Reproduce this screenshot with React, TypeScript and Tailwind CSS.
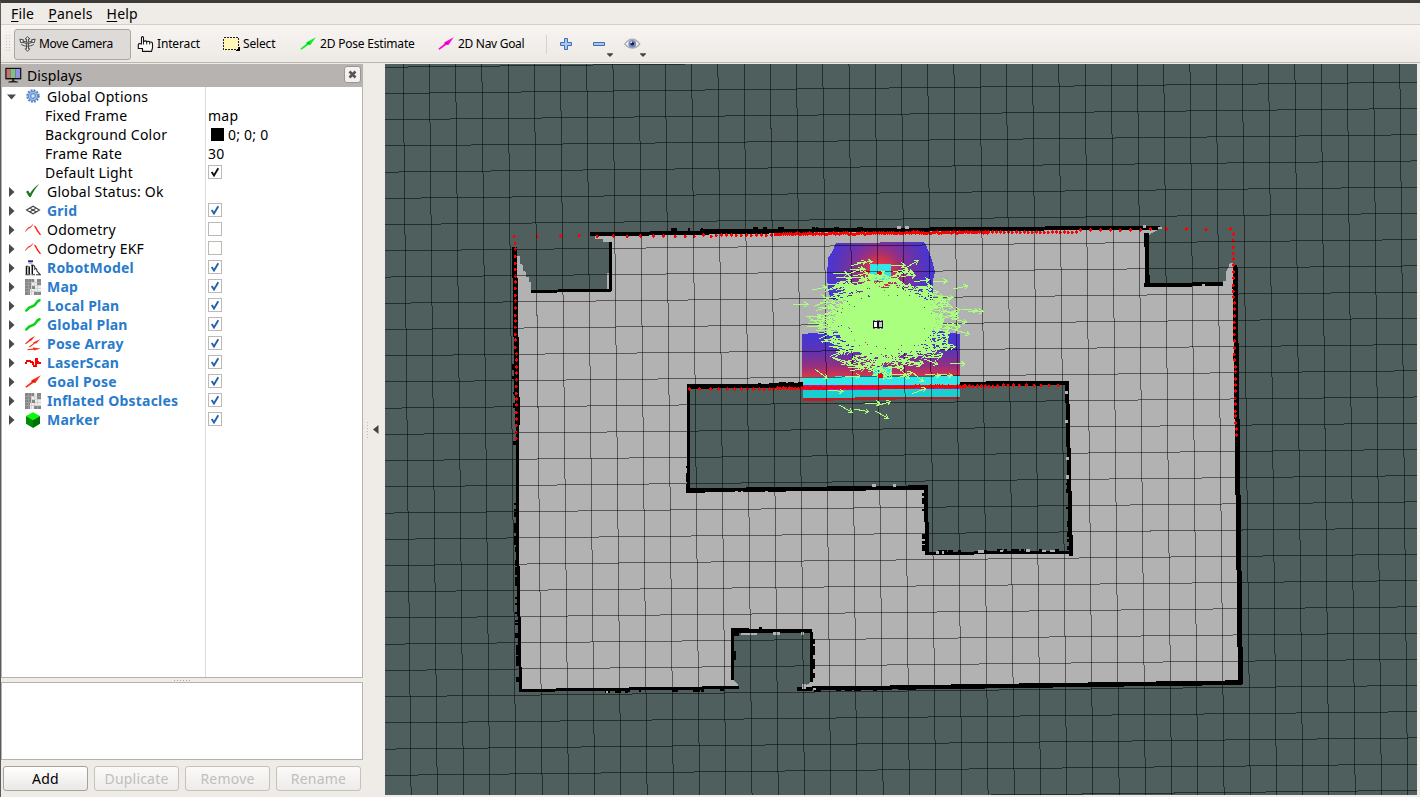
import React from 'react';

const FONT = "font-['Noto_Sans','Open_Sans',sans-serif]";

function makeRandom(seed: number) {
  let s = seed;
  return () => {
    s = (s * 1664525 + 1013904223) % 4294967296;
    return s / 4294967296;
  };
}

/* ---------- Small icons ---------- */

const GearIcon = () => (
  <svg width="16" height="16" viewBox="0 0 16 16" className="-mt-[2px]">
    <circle cx="8" cy="8" r="5.700" fill="none" stroke="#4a7cc0" strokeWidth="2" strokeDasharray="1.790 1.190" />
    <circle cx="8" cy="8" r="4.700" fill="#9dbde6" stroke="#5a8acb" strokeWidth="1" />
    <circle cx="8" cy="8" r="2.600" fill="none" stroke="#5a8acb" strokeWidth="0.800" />
    <circle cx="8" cy="8" r="1" fill="#f2f6fc" />
  </svg>
);
const OkIcon = () => (
  <svg width="16" height="16" viewBox="0 0 16 16" className="-mt-px">
    <path d="M1 8.800 3.200 7.600 5 10.400 C7.500 6.500 10.500 3 14.400 1 C10.500 5 8 9 5.800 14 L4.200 14Z" fill="#1f7a1f" />
  </svg>
);
const GridIcon = () => (
  <svg width="16" height="16" viewBox="0 0 16 16" fill="none" stroke="#444" strokeWidth="1.100" className="-mt-[2px]">
    <path d="M1.500 8 8 4.200 14.500 8 8 11.800Z M4.700 6.100 11.300 9.900 M11.300 6.100 4.700 9.900" />
  </svg>
);
const OdometryIcon = () => (
  <svg width="16" height="16" viewBox="0 0 16 16" fill="#ff2010">
    <path d="M0 9.200 3.200 5.600 5.500 4.500 8 2 7.600 3.500 5.500 5.800 3.500 6.800 .4 9.800z" />
    <path d="M8.500 3.200 11 4.500 12.800 8 16 12.400 15 13.200 12 9.500 10.400 6.500z" />
  </svg>
);
const RobotIcon = () => (
  <svg width="16" height="16" viewBox="0 0 16 16">
    <path d="M3 .3h5v1.800H3z" fill="#1c2f90" />
    <path d="M3.500 2.100h4v1.600h-4z" fill="#aaa" />
    <path d="M1.500 6v8.500M4.200 6.500v7.500M7.300 5v9" stroke="#111" strokeWidth="1.500" />
    <path d="M.5 14.800h5M6.500 14.800H10M11 14.800h5M1 6.200h2.500M6 5.200q3-.8 3.800 1.800v3M10 8q1.800 0 2 3l3 3.400" stroke="#333" strokeWidth="1.100" fill="none" />
  </svg>
);
const MapIcon = () => (
  <svg width="16" height="16" viewBox="0 0 16 16" shapeRendering="crispEdges">
    <path d="M0 0h16v16H0z" fill="#eeeeee" />
    <path d="M3.500 0v16M6.500 0v16M9.500 0v16M12.500 0v16M0 3.500h16M0 6.500h16M0 9.500h16M0 12.500h16" stroke="#d2d2d2" strokeWidth="1" />
    <path d="M0 0h9v3H6v3H6v4H5v6H0zM12 0h4v6h-4zM7 7h3v3H7zM9 13h7v3H9z" fill="#868686" />
    <path d="M3.500 0v16M6.500 0v3M0 3.500h6M0 6.500h5M0 9.500h5M0 12.500h5M12 3.500h4M12.500 13v3" stroke="#9c9c9c" strokeWidth="1" />
  </svg>
);
const PathIcon = () => (
  <svg width="16" height="16" viewBox="0 0 16 16">
    <path d="M1.300 12.500C3.500 9.500 5.500 8.700 8.200 8C11.500 7.200 10.500 3.500 14.500 2.200" stroke="#09d317" strokeWidth="2.500" fill="none" strokeLinecap="round" />
  </svg>
);
const PoseArrayIcon = () => (
  <svg width="16" height="16" viewBox="0 0 16 16" fill="#f5301c">
    <path d="M0 7.400 4.500 3.600 4 3.200 10 0 6.600 4.500 6 4.400 .8 8.200zM4 10.600 8.500 7.200 8 6.600 15.600 3 11 7.800 10.200 7.200 4.600 11.400zM2.500 13.300 8 12.500V11.600L15.800 12.400 9 14.600V13.800L2.600 14.300z" />
  </svg>
);
const LaserIcon = () => (
  <svg width="16" height="16" viewBox="0 0 16 16" shapeRendering="crispEdges" fill="#ff0000">
    <path d="M0 7h2v2H0zM1 5h5v2H1zM5 6h3v2H5zM7 7h2v3H7zM8 10h3v2H8zM10 3h2v9h-2zM11 3h2v3h-2zM12 6h2v3h-2zM13 7h3v2h-3z" />
  </svg>
);
const ArrowIcon = ({ color, dark }: { color: string; dark: string }) => (
  <svg width="16" height="16" viewBox="0 0 16 16">
    <path d="M.3 12.700 6.500 7.700 6.200 6.600 15.800 1.200 10.200 9.200 8.800 8.600 1.500 13.700z" fill={color} />
    <path d="M7 7.400 9.400 5.900 9.200 8.600" fill={dark} />
  </svg>
);
const CubeIcon = () => (
  <svg width="16" height="16" viewBox="0 0 16 16">
    <path d="M8 .2 15 4 8 8 1 4z" fill="#00ff00" />
    <path d="M1 4 8 8v8L1 11.800z" fill="#008c00" />
    <path d="M15 4 8 8v8l7-4.200z" fill="#007000" />
  </svg>
);
const MonitorIcon = () => (
  <svg width="18" height="17" viewBox="0 0 18 17">
    <path d="M.3 .8h16v11.600H.3z" fill="#111" />
    <path d="M1.500 2h4.400v9H1.500z" fill="#c07474" />
    <path d="M5.900 2h4.400v9H5.900z" fill="#7cc47c" />
    <path d="M10.300 2h4.800v9h-4.800z" fill="#9292e4" />
    <path d="M7.200 12h2v2h-2z" fill="#222" />
    <path d="M3.200 14.800q5-2.200 10 0v.8h-10z" fill="#222" />
  </svg>
);
const MoveIcon = () => (
  <svg width="17" height="16" viewBox="0 0 17 16" fill="#f6f6f6" stroke="#444" strokeWidth="1">
    <path d="M8.500 .6 10.800 3H9.400V12.800H10.800L8.500 15.400 6.200 12.800H7.600V3H6.200z" />
    <path d="M.8 3.200 4.500 3.800 3.800 5.200Q8.500 7.500 13.200 5.200L12.500 3.800 16.200 3.200 15 7 14 6.200Q8.500 9.200 3 6.200L2 7z" />
    <path d="M2.200 8.500Q8.500 12 14.800 8.500" fill="none" strokeWidth=".9" />
  </svg>
);
const HandIcon = () => (
  <svg width="17" height="16" viewBox="0 0 17 16">
    <path d="M4.500 8V1.700Q4.500 .6 5.500 .6T6.500 1.700V5.500Q9 4.200 9.700 5.700Q12 4.700 12.700 6.200Q15.500 5.500 15.500 8V12L14.500 15.400H5.500V12.500H1.300V8.500Q1.300 7.500 2.500 7.500z" fill="#fff" stroke="#111" strokeWidth="1.100" />
    <path d="M6.500 5v3.500M9.700 5.700V8.500M12.700 6.200V8.500" stroke="#111" strokeWidth=".9" fill="none" />
  </svg>
);
const SelectIcon = () => (
  <svg width="17" height="14" viewBox="0 0 17 14" shapeRendering="crispEdges">
    <path d="M.5 .5h15v12H.5z" fill="#fff6b8" stroke="#222" strokeDasharray="2 1" />
    <path d="M16.500 9.500v4h-4z" fill="#000" />
  </svg>
);
const EyeIcon = () => (
  <svg width="17" height="12" viewBox="0 0 17 12">
    <path d="M.8 6Q8.300-3.600 15.800 6Q8.300 14.200 .8 6z" fill="#f2f2f2" stroke="#a9a9a4" strokeWidth="1.200" />
    <circle cx="8.300" cy="5.800" r="3.900" fill="#7389c0" />
    <circle cx="8.300" cy="5.800" r="1.800" fill="#14183a" />
    <circle cx="7.300" cy="4.300" r=".9" fill="#eef" />
  </svg>
);
const Caret = () => (
  <svg width="6" height="4" viewBox="0 0 6 4"><path d="M0 .3h6v.8L3 4 0 1.100z" fill="#444" /></svg>
);

/* ---------- Displays tree ---------- */

type Row = {
  label: string;
  icon?: React.ReactNode;
  arrow?: 'open' | 'closed';
  blue?: boolean;
  check?: boolean;
  value?: string;
  swatch?: boolean;
};

const rows: Row[] = [
  { label: 'Global Options', icon: <GearIcon />, arrow: 'open' },
  { label: 'Fixed Frame', value: 'map' },
  { label: 'Background Color', value: '0; 0; 0', swatch: true },
  { label: 'Frame Rate', value: '30' },
  { label: 'Default Light', check: true },
  { label: 'Global Status: Ok', icon: <OkIcon />, arrow: 'closed' },
  { label: 'Grid', icon: <GridIcon />, arrow: 'closed', blue: true, check: true },
  { label: 'Odometry', icon: <OdometryIcon />, arrow: 'closed', check: false },
  { label: 'Odometry EKF', icon: <OdometryIcon />, arrow: 'closed', check: false },
  { label: 'RobotModel', icon: <RobotIcon />, arrow: 'closed', blue: true, check: true },
  { label: 'Map', icon: <MapIcon />, arrow: 'closed', blue: true, check: true },
  { label: 'Local Plan', icon: <PathIcon />, arrow: 'closed', blue: true, check: true },
  { label: 'Global Plan', icon: <PathIcon />, arrow: 'closed', blue: true, check: true },
  { label: 'Pose Array', icon: <PoseArrayIcon />, arrow: 'closed', blue: true, check: true },
  { label: 'LaserScan', icon: <LaserIcon />, arrow: 'closed', blue: true, check: true },
  { label: 'Goal Pose', icon: <ArrowIcon color="#ff2a12" dark="#a01808" />, arrow: 'closed', blue: true, check: true },
  { label: 'Inflated Obstacles', icon: <MapIcon />, arrow: 'closed', blue: true, check: true },
  { label: 'Marker', icon: <CubeIcon />, arrow: 'closed', blue: true, check: true },
];

function TreeRow({ row }: { row: Row }) {
  return (
    <div className="flex h-[19px] items-center">
      <div className="flex h-full w-[204px] shrink-0 items-center border-r border-[#dcdcdc]">
        <div className="w-[23px] shrink-0 pl-[5px]">
          {row.arrow === 'open' && (
            <svg width="9" height="6" viewBox="0 0 9 6"><path d="M0 .5h9L4.500 5.500z" fill="#4a4a4a" /></svg>
          )}
          {row.arrow === 'closed' && (
            <svg width="6" height="10" viewBox="0 0 6 10" className="ml-[2px]"><path d="M0 0v10L5.500 5z" fill="#4a4a4a" /></svg>
          )}
        </div>
        {row.icon && <div className="mr-[6px] w-4 shrink-0">{row.icon}</div>}
        <span
          className={
            row.blue
              ? 'text-[14px] leading-[19px] font-bold tracking-[0.2px] whitespace-nowrap text-[#2a7bcb]'
              : row.icon
                ? 'text-[14px] leading-[19px] tracking-[0.230px] whitespace-nowrap text-black'
                : 'ml-[20px] text-[14px] leading-[19px] tracking-[0.230px] whitespace-nowrap text-black'
          }
        >
          {row.label}
        </span>
      </div>
      <div className="-mt-px flex items-center pl-[2px] text-[14px] leading-[19px] tracking-[0.230px]">
        {row.swatch && <span className="mr-1 ml-[3px] size-[13px] bg-black" />}
        {row.value}
        {row.check !== undefined && (
          <svg width="14" height="14" viewBox="0 0 14 14">
            <rect x=".5" y=".5" width="13" height="13" fill="#fff" stroke="#bdbab6" />
            {row.check && (
              <path d="M3.700 7 6 10.500 10.300 3.300" fill="none" stroke={row.blue ? '#2261a8' : '#111'} strokeWidth="1.900" />
            )}
          </svg>
        )}
      </div>
    </div>
  );
}

/* ---------- 3D view ---------- */

const CELL = 26.226;

function GridLines() {
  const lines: React.ReactNode[] = [];
  for (let i = -17; i <= 31; i++) {
    const x = 613 + CELL * i;
    lines.push(<line key={'v' + i} x1={x + (60 - 68) / 92} y1={60} x2={x + (800 - 68) / 92} y2={800} />);
  }
  for (let k = -1; k <= 39; k++) {
    const y = 67 + CELL * k;
    lines.push(<line key={'h' + k} x1={380} y1={y + 29 / 92} x2={1420} y2={y - 1011 / 92} />);
  }
  return (
    <g stroke="#000" strokeOpacity="0.5" strokeWidth="1">
      {lines}
    </g>
  );
}

function arrowPath(x: number, y: number, angle: number, len = 15) {
  const ex = x + Math.cos(angle) * len;
  const ey = y + Math.sin(angle) * len;
  const h = 4.5;
  const a = angle + 2.5;
  const b = angle - 2.5;
  const f = (n: number) => n.toFixed(1);
  return `M${f(x)} ${f(y)}L${f(ex)} ${f(ey)}M${f(ex + Math.cos(a) * h)} ${f(ey + Math.sin(a) * h)}L${f(ex)} ${f(ey)}L${f(ex + Math.cos(b) * h)} ${f(ey + Math.sin(b) * h)}`;
}

function poseArrows() {
  const rnd = makeRandom(7);
  const gauss = () => Math.sqrt(-2 * Math.log(rnd() + 1e-9)) * Math.cos(6.28318 * rnd());
  let d = '';
  for (let i = 0; i < 1250; i++) {
    const gx = gauss();
    const gy = gauss();
    if (gx * gx + gy * gy > 6.4) continue;
    d += arrowPath(877 + gx * 28, 321.5 + gy * 21.5, gauss() * 0.26);
  }
  const strays: [number, number, number][] = [
    [793, 305, -0.05], [806, 316, 0.08], [807, 327, -0.1], [812, 290, -0.2], [815, 369, 0.65], [833, 274, -0.02],
    [953, 289, -0.2], [968, 312, -0.05], [962, 309, 0.1], [932, 281, 0.02], [950, 363, 0.08], [937, 374, 0.1],
    [839, 405, 0.5], [854, 409, 0.18], [875, 411, 0.5], [865, 404, -0.08], [876, 406, -0.3], [828, 390, 0.1],
    [912, 394, -0.4], [851, 266, -0.3], [857, 263, -0.1], [890, 265, 0.02], [905, 268, -0.5], [893, 272, -0.2],
    [845, 376, 0], [925, 374, 0.1], [912, 372, 0.7], [898, 378, -0.4], [850, 270, -0.05], [952, 319, 0.2], [955, 330, 0.3],
    [820, 302, 0], [818, 308, -0.1], [821, 342, -0.05], [938, 296, 0.1], [940, 346, 0.05],
  ];
  strays.forEach(([x, y, a]) => { d += arrowPath(x, y, a); });
  return d;
}
const ARROWS = poseArrows();

function coreSpecks() {
  const rnd = makeRandom(21);
  const colors = ['#5a35b4', '#b03070', '#7a7a7a', '#4038d8'];
  return Array.from({ length: 34 }, (_, i) => {
    const t = rnd() * 6.283;
    const r = 0.75 + rnd() * 0.3;
    return (
      <rect key={i} x={Math.round(884 + Math.cos(t) * 48 * r)} y={Math.round(321 + Math.sin(t) * 33 * r)} width="1" height="1" fill={colors[i % 4]} />
    );
  });
}

/* Short wall fragments scattered along a segment. */
function wallNoise(x1: number, y1: number, x2: number, y2: number, n: number, seed: number, vertical: boolean) {
  const rnd = makeRandom(seed * 7919);
  rnd();
  let d = '';
  for (let i = 0; i < n; i++) {
    const t = rnd();
    const x = Math.round(x1 + (x2 - x1) * t);
    const y = Math.round(y1 + (y2 - y1) * t);
    const l = 2 + Math.floor(rnd() * 5);
    d += vertical ? `M${x} ${y}h3v${l}h-3z` : `M${x} ${y}h${l}v3h-${l}z`;
  }
  return d;
}
const WALL_NOISE =
  wallNoise(514, 500, 516, 680, 32, 3, true) +
  wallNoise(512, 350, 514, 480, 5, 4, true) +
  wallNoise(590, 690, 738, 688, 11, 5, false) +
  wallNoise(800, 689, 900, 687, 12, 6, false) +
  wallNoise(1140, 682, 1235, 681, 8, 12, false) +
  wallNoise(755, 383, 800, 382, 8, 8, false) +
  wallNoise(686, 440, 686, 485, 8, 9, true) +
  wallNoise(922, 492, 922, 545, 7, 10, true) +
  wallNoise(1066, 480, 1067, 548, 8, 11, true) +
  wallNoise(930, 550, 1060, 549, 15, 13, false) +
  wallNoise(812, 635, 812, 680, 7, 14, true) +
  wallNoise(733, 640, 733, 665, 3, 15, true) +
  wallNoise(630, 228, 860, 227, 10, 16, false) +
  wallNoise(1232, 270, 1235, 450, 10, 17, true);

function laserPoints() {
  const rnd = makeRandom(99);
  let d = '';
  const dot = (x: number, y: number) => {
    const px = Math.round(x);
    const py = Math.round(y + rnd() - 0.5);
    d += rnd() > 0.4
      ? `M${px - 1} ${py - 1}h3v2h-3zM${px} ${py - 2}h1v4h-1z`
      : `M${px - 1} ${py - 1}h2v3h-2zM${px} ${py}h2v1h-2z`;
  };
  [514, 537, 560, 579, 597, 613, 627, 640, 653, 663, 675, 685, 694, 703, 711].forEach((x) => dot(x, 236 - (x - 537) / 300));
  for (let x = 716; x < 775; x += 5) dot(x, 235);
  for (let x = 775; x < 988; x += 2) dot(x, 234 - (x - 775) / 110);
  for (let x = 988; x < 1080; x += 4) dot(x, 232);
  for (let x = 1080; x < 1150; x += 10) dot(x, 230);
  [1150, 1166, 1186, 1206, 1230].forEach((x) => dot(x, 229));
  for (let y = 243; y < 444; y += 6.5) dot(514.5 + (y > 350 ? 1.5 : 0), y);
  for (let y = 234; y < 441; y += 6.3) dot(1232.5 + (y - 234) / 65, y);
  [689, 699, 710, 718, 727, 734, 741, 747, 753, 759, 764, 769, 773].forEach((x) => dot(x, 389));
  for (let x = 777; x < 802; x += 3) dot(x, 388);
  for (let x = 802; x < 965; x += 1.8) dot(x, 387.6 - (x - 802) / 120);
  for (let x = 965; x < 1000; x += 4) dot(x, 386);
  [1003, 1008, 1013, 1019, 1026, 1034, 1041, 1049, 1058].forEach((x) => dot(x, 385));
  return d;
}
const LASER = laserPoints();

function RobotView() {
  return (
    <svg width="1032" height="731" viewBox="385 64 1032 731" shapeRendering="crispEdges" className="block">
      <defs>
        <radialGradient id="inflate-top" gradientUnits="userSpaceOnUse" cx="880" cy="272" r="55">
          <stop offset="0" stopColor="#ee3040" />
          <stop offset="0.18" stopColor="#e03444" />
          <stop offset="0.34" stopColor="#a8306c" />
          <stop offset="0.5" stopColor="#80309a" />
          <stop offset="0.75" stopColor="#5c34b8" />
          <stop offset="1" stopColor="#4436da" />
        </radialGradient>
        <linearGradient id="inflate-bottom" gradientUnits="userSpaceOnUse" x1="0" y1="333" x2="0" y2="377">
          <stop offset="0" stopColor="#4436da" />
          <stop offset="0.35" stopColor="#5634bc" />
          <stop offset="0.75" stopColor="#94307e" />
          <stop offset="1" stopColor="#de3448" />
        </linearGradient>
      </defs>

      <rect x="385" y="64" width="1032" height="731" fill="#4e5f5d" />

      {/* Free space */}
      <path
        fill="#b2b2b2"
        fillRule="evenodd"
        d="M595 234 1160 228 1156 231 1150 234 1149 235 1148 286 1223 286 1223 281 1226 281 1226 272 1228 268 1230 263 1233 263 1240 683 803 690 803 686 808 684 811 681 811 631 733 631 733 680 738 684 738 688 520 691 514 248 517 251 517 256 520 256 520 264 523 265 523 271 526 272 526 277 529 277 529 282 531 282 531 291 611 291 611 242 603 242 603 239 595 239Z
           M689 386 1068 383 1070 553 928 553 926 487 689 491Z"
      />

      {/* Occupied cells */}
      <g fill="none" stroke="#000" strokeLinejoin="miter">
        <path d="M514.500 247 517.500 425" strokeWidth="5" />
        <path d="M517 425 517 540" strokeWidth="3" />
        <path d="M517.500 540 520.500 691" strokeWidth="3" />
        <path d="M519 690.500 739 687.500" strokeWidth="3" />
        <path d="M797 688.700 1242 683" strokeWidth="4" />
        <path d="M900 687.500 1242 682.500" strokeWidth="4.500" />
        <path d="M1235 265 1240.500 684" strokeWidth="5" />
        <path d="M590 234.500 770 231.500" strokeWidth="4" />
        <path d="M700 231.500 1160 227.500" strokeWidth="4" />
        <path d="M610.500 242 611 291" strokeWidth="3" />
        <path d="M531 291.500 612 290" strokeWidth="3" />
        <path d="M1146.500 233 1147.500 287" strokeWidth="4.500" />
        <path d="M1144 285.300 1223 284" strokeWidth="4" />
        <path d="M687 386.500 1069 383" strokeWidth="4.500" />
        <path d="M688.500 386 689 491" strokeWidth="3" />
        <path d="M686 490.500 928 487.500" strokeWidth="4.500" />
        <path d="M925.500 487 927.500 555" strokeWidth="4" />
        <path d="M926 553.500 1072 552" strokeWidth="3" />
        <path d="M1067 381 1071 556" strokeWidth="4" />
        <path d="M731 630.500 812 630.500" strokeWidth="4" />
        <path d="M732.500 630 732.500 680" strokeWidth="3" />
        <path d="M811 630 811.500 682" strokeWidth="3" />
      </g>
      <path d={WALL_NOISE} fill="#000" />
      <path d="M731 628h18v4h-18zM731 628h8v8h-8zM759 627h3v3h-3zM794 629h18v3h-18z" fill="#000" />
      <path
        fill="#b2b2b2"
        d="M741 633h16v2h-16zM773 632h7v3h-7zM801 632h3v3h-3zM802 684h4v5h-4zM813 688h3v2h-3zM765 491h3v2h-3zM735 491h3v2h-3zM741 491h2v2h-2zM872 484h4v3h-4zM893 484h3v3h-3zM1065 391h3v3h-3zM1065 420h3v3h-3zM1066 457h3v3h-3zM1066 475h3v4h-3zM936 551h3v3h-3zM942 551h2v3h-2zM978 550h6v3h-6zM1000 550h3v2h-3zM1026 549h4v3h-4zM1042 550h4v2h-4zM1050 550h5v2h-5zM897 226h4v3h-4zM905 226h4v3h-4zM1143 225h3v3h-3zM1158 227h4v2h-4zM1202 284h3v3h-3zM607 273h2v16h-2zM606 691h2v2h-2z"
      />

      {/* Inflated obstacles */}
      <path d="M836 243 924 242 926 245 931 257 933 264 935 272 933 280 933 300 831 300 828 290 827 276 828 258 832 252Z" fill="url(#inflate-top)" />
      <path d="M870 264h21v17h-21z" fill="#30e6e6" />
      <path d="M802 334 825 332 940 331 959.500 334V377H802Z" fill="url(#inflate-bottom)" />
      <path d="M873 367h19v10h-19z" fill="#30e6e6" />
      <path d="M803 378 845 376H959.500V386H803Z" fill="#30e8e8" />
      <path d="M803 388H960V397L803 399Z" fill="#18d0d0" />
      <path d="M803 385.500 960 384.500V389L803 390Z" fill="#c010b8" />
      <path d="M803 398 960 396.500V398.500L803 401Z" fill="#c01c28" />

      <path d={LASER} fill="#ff0000" />
      <GridLines />

      {/* Particle cloud */}
      <ellipse cx="885" cy="321" rx="50" ry="33" fill="#aaff7f" />
      <path d={ARROWS} fill="none" stroke="#aaff7f" strokeWidth="1" />
      {coreSpecks()}
      <path d="M870 265h21v6h-21z" fill="#30e6e6" fillOpacity="0.7" />
      <path d="M877 272h5v2h-5zM879 271h2v4h-2zM878 374h5v4h-5zM880 373h2v5h-2z" fill="#ff0000" />

      {/* Robot base */}
      <path d="M873 321h10v7h-10z" fill="#111" />
      <path d="M873 320h2v1h-2zM877 320h3v1h-3zM881 320h2v1h-2zM873 328h2v1h-2zM877 328h3v1h-3zM881 328h2v1h-2z" fill="#777" />
      <path d="M874 322h3v5h-3z" fill="#fff" />
      <path d="M879 322h3v5h-3z" fill="#c4c4dc" />
      <path d="M875 320h2v1h-2zM880 320h1v1h-1zM875 328h2v1h-2zM880 328h1v1h-1z" fill="#ddd" />
    </svg>
  );
}

/* ---------- Chrome ---------- */

const menus = ['File', 'Panels', 'Help'];

function MenuBar() {
  return (
    <div className="flex h-[22px] items-center gap-[14px] border-b border-[#d3cfcb] bg-[#efebe7] pl-[10px] text-[14px] leading-[21px] tracking-[0.2px]">
      {menus.map((m) => (
        <span key={m}>
          <span className="underline decoration-1 underline-offset-2">{m[0]}</span>
          {m.slice(1)}
        </span>
      ))}
    </div>
  );
}

function Toolbar() {
  return (
    <div className="flex h-[38px] items-center border-b border-[#b9b5b1] bg-gradient-to-b from-[#f7f4f1] to-[#edeae6] pt-px text-[12px] tracking-[-0.15px]">
      <svg width="4" height="18" viewBox="0 0 4 18" shapeRendering="crispEdges" className="ml-[5px]">
        <path d="M.5 0v18M3.500 0v18" stroke="#c6c2be" strokeDasharray="1 2" />
      </svg>
      <div className="ml-1 flex h-[31px] w-[117px] items-center rounded-[3px] border border-[#aaa6a2] bg-[#dedad7] pl-1 tracking-[-0.35px]">
        <MoveIcon />
        <span className="ml-[3px] whitespace-nowrap">Move Camera</span>
      </div>
      <div className="ml-[6px] flex w-[86px] items-center gap-[3px]">
        <HandIcon />
        <span>Interact</span>
      </div>
      <div className="flex w-[77px] items-center gap-[3px]">
        <SelectIcon />
        <span>Select</span>
      </div>
      <div className="flex w-[138px] items-center gap-[4px] tracking-[-0.2px]">
        <ArrowIcon color="#0cf024" dark="#08a018" />
        <span className="whitespace-nowrap">2D Pose Estimate</span>
      </div>
      <div className="flex w-[108px] items-center gap-[4px] tracking-[-0.3px]">
        <ArrowIcon color="#ff00dd" dark="#a0088c" />
        <span className="whitespace-nowrap">2D Nav Goal</span>
      </div>
      <div className="h-[19px] w-px bg-[#d5d1cd]" />
      <svg width="12" height="12" viewBox="0 0 12 12" className="ml-[13px]">
        <path d="M4.500 .5h3v4h4v3h-4v4h-3v-4h-4v-3h4z" fill="#a9c6ee" stroke="#3e6fb0" />
      </svg>
      <svg width="12" height="4" viewBox="0 0 12 4" className="ml-[21px]">
        <path d="M.5 .5h11v3H.5z" fill="#a9c6ee" stroke="#3e6fb0" />
      </svg>
      <div className="mt-[21px] ml-[2px] flex"><Caret /></div>
      <div className="ml-[11px]"><EyeIcon /></div>
      <div className="mt-[21px] -ml-px flex"><Caret /></div>
    </div>
  );
}

const buttons = [
  { label: 'Add', enabled: true },
  { label: 'Duplicate', enabled: false },
  { label: 'Remove', enabled: false },
  { label: 'Rename', enabled: false },
];

function DisplaysPanel() {
  return (
    <div className="flex w-[362px] shrink-0 flex-col">
      <div className="flex h-[23px] items-center bg-[#b7b3b0] pr-[2px] pl-1">
        <MonitorIcon />
        <span className="ml-[4px] flex-1 text-[14px] leading-[22px] tracking-[0.1px]">Displays</span>
        <div className="mb-[2px] flex size-[17px] items-center justify-center rounded-[3px] border border-[#9a9692] bg-[#f4f2f0]">
          <svg width="9" height="9" viewBox="0 0 9 9"><path d="M1.500 1.500l6 6M7.500 1.500l-6 6" stroke="#555" strokeWidth="2.600" /></svg>
        </div>
      </div>
      <div className="flex h-[591px] flex-col border-x border-b border-[#b5b1ad] bg-white">
        <div>
          {rows.map((r) => <TreeRow key={r.label} row={r} />)}
        </div>
        <div className="w-[204px] flex-1 border-r border-[#dcdcdc]" />
      </div>
      <div className="flex h-[4px] items-center justify-center">
        <svg width="17" height="1" viewBox="0 0 17 1" shapeRendering="crispEdges"><path d="M0 .5h17" stroke="#a8a4a0" strokeDasharray="1 2" /></svg>
      </div>
      <div className="h-[78px] border border-[#b5b1ad] bg-white" />
      <div className="flex gap-[6px] pt-[6px] pl-[2px]">
        {buttons.map((b) => (
          <button
            key={b.label}
            className={
              b.enabled
                ? 'h-[25px] w-[85px] rounded-[3px] border border-[#a5a19d] bg-gradient-to-b from-white to-[#ebe8e5] text-[14px] leading-[22px] tracking-[0.2px] text-black'
                : 'h-[25px] w-[85px] rounded-[3px] border border-[#c5c1bd] bg-gradient-to-b from-[#fbfaf9] to-[#eeebe8] text-[14px] leading-[22px] tracking-[0.2px] text-[#c0bebc]'
            }
          >
            {b.label}
          </button>
        ))}
      </div>
    </div>
  );
}

export default function App() {
  return (
    <div className={`flex h-[797px] w-[1420px] flex-col overflow-hidden border-t-[3px] border-l border-t-[#3c3b37] border-l-[#5c5a58] bg-[#efebe7] text-black ${FONT}`}>
      <MenuBar />
      <Toolbar />
      <div className="flex flex-1 pt-px">
        <DisplaysPanel />
        <div className="flex w-[22px] shrink-0 items-center pl-[4px]">
          <svg width="2" height="18" viewBox="0 0 2 18" shapeRendering="crispEdges"><path d="M.5 0v18" stroke="#c0bcb8" strokeDasharray="1 2" /></svg>
          <svg width="6" height="9" viewBox="0 0 6 9" className="mb-[2px] ml-[4px]"><path d="M5.500 0v9L0 4.500z" fill="#444" /></svg>
        </div>
        <RobotView />
      </div>
    </div>
  );
}
